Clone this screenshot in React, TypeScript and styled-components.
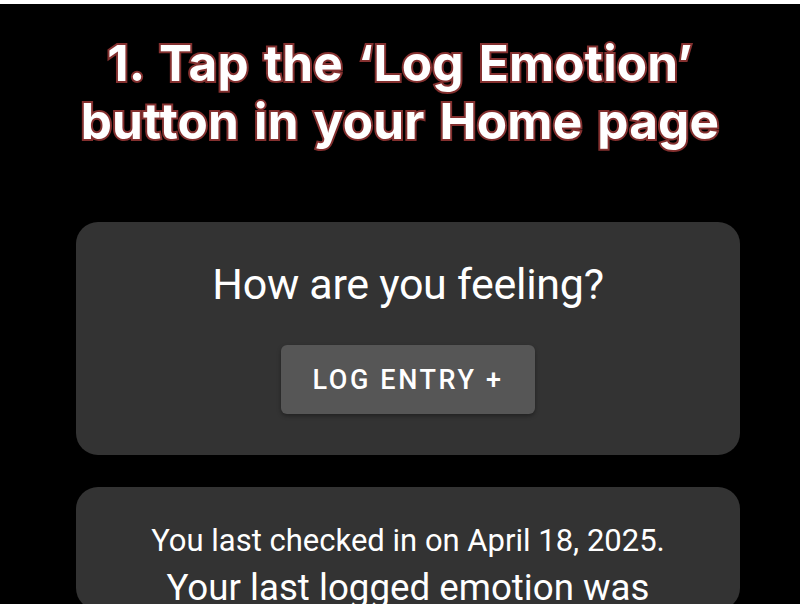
import React from "react";
import styled, { createGlobalStyle } from "styled-components";

const Global = createGlobalStyle`
  html, body { margin: 0; padding: 0; background: #ffffff; }
  body { font-family: Roboto, "Noto Sans", sans-serif; overflow: hidden; }
`;

const Page = styled.div`
  margin-top: 4px;
  height: 600px;
  background: #000;
  display: flex;
  flex-direction: column;
  align-items: stretch;
  overflow: hidden;
`;

const Title = styled.h1`
  margin: 30px 0 0;
  flex-shrink: 0;
  font-family: Inter, "Noto Sans", sans-serif;
  font-weight: 700;
  font-size: 49.5px;
  line-height: 58px;
  letter-spacing: 0.2px;
  word-spacing: 3px;
  text-align: center;
  color: #fff;
  -webkit-text-stroke: 4px #84302f;
  paint-order: stroke fill;
`;

const Card = styled.section<{ $h?: number; $mt: number }>`
  margin: ${(p) => p.$mt}px 60px 0 76px;
  width: 664px;
  flex-shrink: 0;
  ${(p) => (p.$h ? `height: ${p.$h}px;` : "flex-grow: 1;")}
  box-sizing: border-box;
  background: #333333;
  border-radius: 22px;
  display: flex;
  flex-direction: column;
  align-items: center;
  color: #fff;
`;

const Question = styled.div`
  margin-top: 35px;
  font-size: 43px;
  line-height: 54px;
  font-weight: 400;
  letter-spacing: -0.3px;
`;

const LogButton = styled.button`
  margin-top: 34px;
  width: 254px;
  height: 69px;
  border: none;
  border-radius: 6px;
  background: #565656;
  color: #fff;
  font-family: Roboto, sans-serif;
  font-weight: 500;
  font-size: 27px;
  letter-spacing: 2.6px;
  box-shadow: 0 2px 4px rgba(0, 0, 0, 0.35);
`;

const Line = styled.div<{ $size: number; $mt: number }>`
  margin-top: ${(p) => p.$mt}px;
  font-size: ${(p) => p.$size}px;
  line-height: 1.2;
  white-space: nowrap;
`;

export default function App() {
  return (
    <>
      <Global />
      <Page>
        <Title>
          1. Tap the ‘Log Emotion’
          <br />
          button in your Home page
        </Title>
        <Card $h={233} $mt={72}>
          <Question>How are you feeling?</Question>
          <LogButton>LOG ENTRY +</LogButton>
        </Card>
        <Card $mt={32}>
          <Line $size={31} $mt={35}>You last checked in on April 18, 2025.</Line>
          <Line $size={36.7} $mt={7}>Your last logged emotion was</Line>
        </Card>
      </Page>
    </>
  );
}
